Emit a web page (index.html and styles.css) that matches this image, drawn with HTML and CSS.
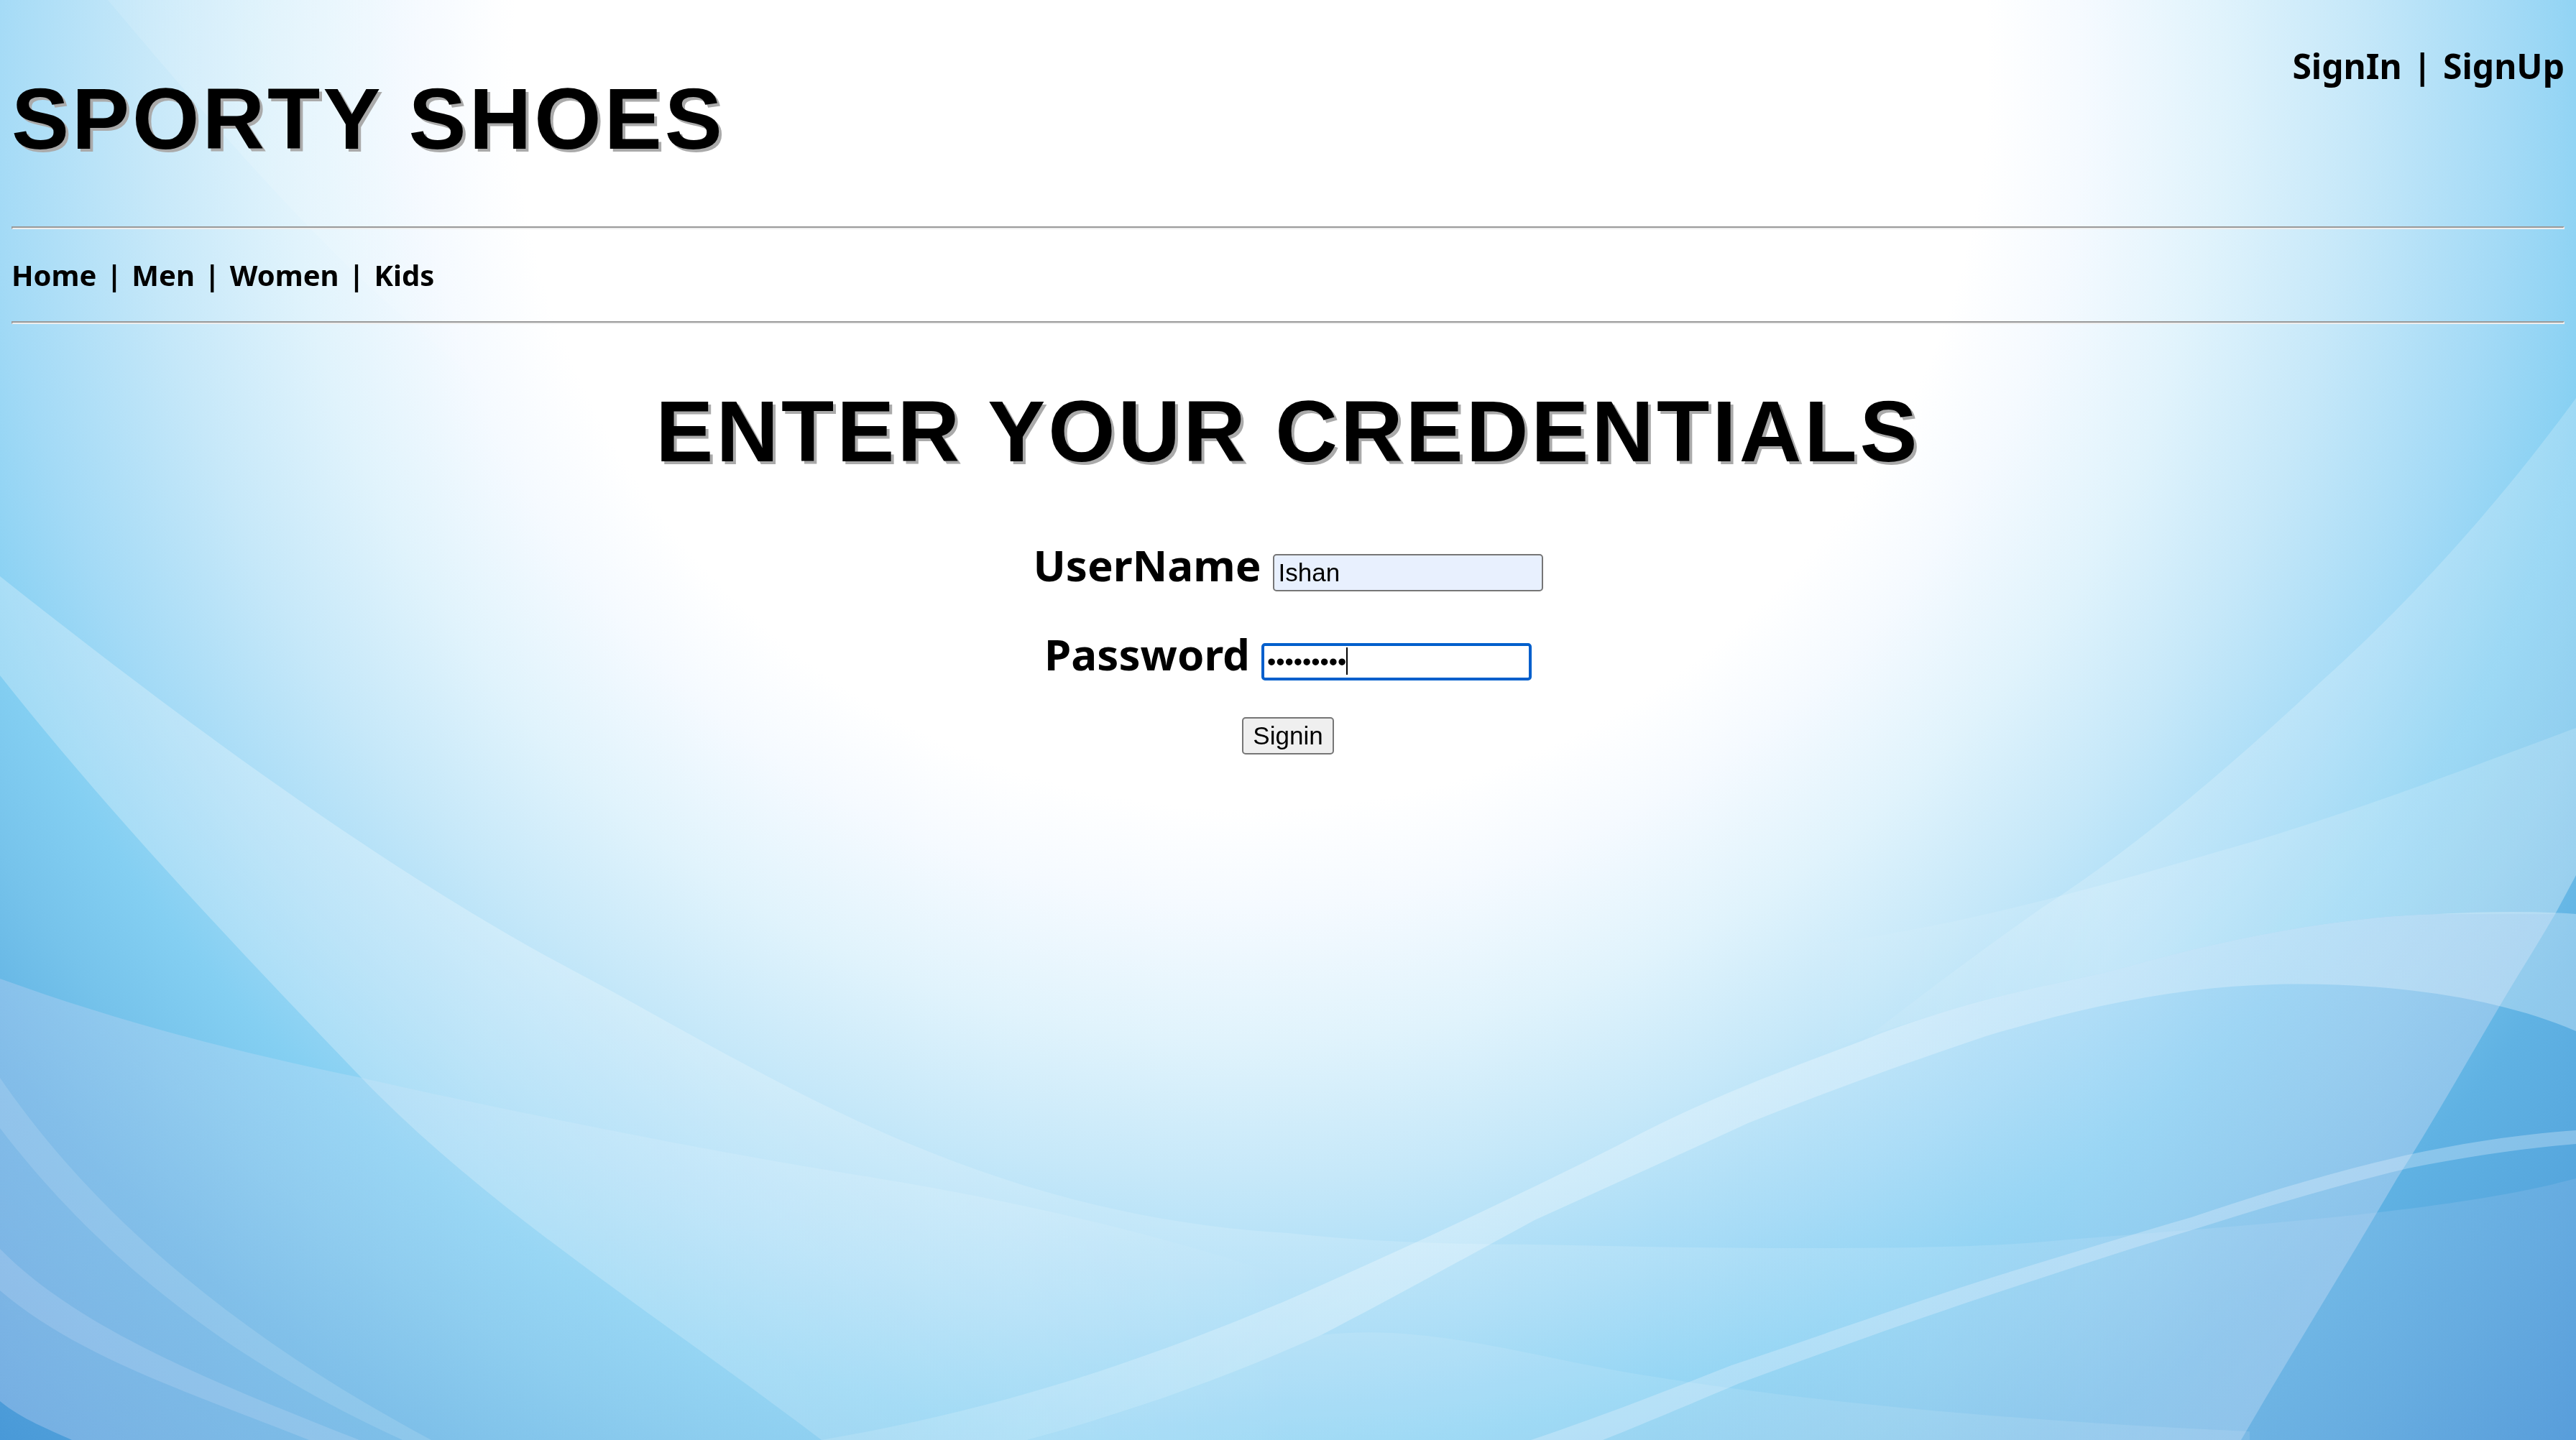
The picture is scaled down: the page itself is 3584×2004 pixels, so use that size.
FILE: index.html
```html
<!DOCTYPE html>
<html lang="en">
<head>
<meta charset="utf-8">
<title>Sporty Shoes</title>
<link rel="stylesheet" href="styles.css">
</head>
<body>
<svg class="backdrop" viewBox="0 0 3584 2004" preserveAspectRatio="none" aria-hidden="true">
  <defs>
    <radialGradient id="sky" gradientUnits="userSpaceOnUse" cx="1740" cy="100" r="2700">
      <stop offset=".38" stop-color="#fff"/>
      <stop offset=".43" stop-color="#f5faff"/>
      <stop offset=".5" stop-color="#e0f3fc"/>
      <stop offset=".57" stop-color="#c6e8f9"/>
      <stop offset=".65" stop-color="#a3daf6"/>
      <stop offset=".71" stop-color="#84cff2"/>
      <stop offset=".76" stop-color="#76c3eb"/>
      <stop offset=".82" stop-color="#60b2e3"/>
      <stop offset=".9" stop-color="#54a4dc"/>
      <stop offset="1" stop-color="#4090d4"/>
    </radialGradient>
    <linearGradient id="leftSheet" gradientUnits="userSpaceOnUse" x1="0" y1="900" x2="1500" y2="1700">
      <stop offset="0" stop-color="#fff" stop-opacity=".26"/>
      <stop offset=".5" stop-color="#fff" stop-opacity=".26"/>
      <stop offset="1" stop-color="#fff" stop-opacity=".14"/>
    </linearGradient>
    <linearGradient id="lowSheet" gradientUnits="userSpaceOnUse" x1="0" y1="0" x2="1800" y2="0">
      <stop offset="0" stop-color="#bccff2" stop-opacity=".38"/>
      <stop offset=".4" stop-color="#d8edfb" stop-opacity=".24"/>
      <stop offset=".8" stop-color="#fff" stop-opacity=".12"/>
      <stop offset="1" stop-color="#fff" stop-opacity="0"/>
    </linearGradient>
    <linearGradient id="rightSheet" gradientUnits="userSpaceOnUse" x1="2500" y1="0" x2="3584" y2="0">
      <stop offset="0" stop-color="#fff" stop-opacity="0"/>
      <stop offset=".4" stop-color="#fff" stop-opacity=".2"/>
      <stop offset="1" stop-color="#fff" stop-opacity=".2"/>
    </linearGradient>
    <linearGradient id="steepSheet" gradientUnits="userSpaceOnUse" x1="2300" y1="0" x2="3300" y2="0">
      <stop offset="0" stop-color="#d8ecfb" stop-opacity="0"/>
      <stop offset=".6" stop-color="#d0e6fa" stop-opacity=".28"/>
      <stop offset="1" stop-color="#c4d9f4" stop-opacity=".44"/>
    </linearGradient>
    <linearGradient id="floorSheet" gradientUnits="userSpaceOnUse" x1="1792" y1="0" x2="3584" y2="0">
      <stop offset="0" stop-color="#fff" stop-opacity=".14"/>
      <stop offset=".5" stop-color="#e8f6ff" stop-opacity=".16"/>
      <stop offset="1" stop-color="#a9c4ee" stop-opacity=".2"/>
    </linearGradient>
    <linearGradient id="band" gradientUnits="userSpaceOnUse" x1="1150" y1="0" x2="3584" y2="0">
      <stop offset="0" stop-color="#fff" stop-opacity=".12"/>
      <stop offset=".3" stop-color="#fff" stop-opacity=".3"/>
      <stop offset="1" stop-color="#e4f2fc" stop-opacity=".36"/>
    </linearGradient>
    <linearGradient id="cornerSheet" gradientUnits="userSpaceOnUse" x1="0" y1="0" x2="900" y2="0">
      <stop offset="0" stop-color="#fff" stop-opacity=".05"/>
      <stop offset=".3" stop-color="#fff" stop-opacity=".14"/>
      <stop offset="1" stop-color="#fff" stop-opacity="0"/>
    </linearGradient>
  </defs>
  <rect width="3584" height="2004" fill="url(#sky)"/>
  <path fill="url(#cornerSheet)" d="M150 0C260 130 420 320 560 440S850 700 1100 820V0Z"/>
  <path fill="url(#leftSheet)" d="M0 802C250 1000 540 1215 800 1352S1350 1690 1792 1716V2004H1143C900 1820 676 1680 503 1500S150 1130 0 940Z"/>
  <path fill="url(#floorSheet)" d="M1792 1716C1900 1728 2020 1732 2135 1732C2400 1738 2680 1740 2820 1730C3080 1708 3400 1690 3584 1640V2004H1792Z"/>
  <path fill="url(#lowSheet)" d="M0 1362C160 1420 330 1465 503 1500C700 1545 1000 1604 1143 1627C1250 1645 1500 1680 1800 1780V2004H100C70 1990 30 1975 0 1950Z"/>
  <path fill="#fff" fill-opacity=".13" d="M0 1500C130 1690 330 1860 600 2004H560C310 1890 130 1740 0 1570Z"/>
  <path fill="#dce8fb" fill-opacity=".2" d="M0 1738C110 1850 300 1925 500 2004H430C270 1940 110 1890 0 1796Z"/>
  <path fill="url(#rightSheet)" d="M3584 554C3470 710 3350 840 3231 947C3100 1070 2970 1180 2843 1262C2760 1320 2680 1380 2592 1448C2710 1400 2830 1375 2935 1352C3080 1310 3250 1275 3392 1272H3555L3584 1218Z"/>
  <path fill="url(#rightSheet)" fill-opacity=".8" d="M3584 1013C3430 1070 3250 1140 3083 1186C2900 1240 2720 1290 2535 1314V1465C2650 1420 2800 1380 2935 1352C3080 1310 3250 1275 3392 1272H3555L3584 1218Z"/>
  <path fill="url(#steepSheet)" d="M3555 1272C3530 1315 3500 1362 3472 1410C3425 1490 3380 1570 3335 1640C3265 1760 3190 1880 3118 2004H2300V1572C2400 1525 2490 1485 2592 1448C2710 1400 2830 1375 2935 1352C3080 1310 3250 1275 3392 1272Z"/>
  <path fill="url(#band)" d="M1143 2004C1400 1960 1600 1890 1792 1809C1960 1735 2110 1665 2249 1595C2370 1530 2480 1490 2592 1448C2710 1400 2830 1375 2935 1352C3080 1310 3250 1275 3392 1272Q3500 1266 3584 1272V1435C3480 1390 3330 1366 3163 1370C3020 1374 2890 1404 2763 1442C2650 1480 2540 1520 2432 1563C2330 1610 2230 1655 2135 1698C2030 1755 1940 1805 1838 1858C1700 1920 1570 1965 1429 2004Z"/>
  <path fill="#eef6ff" fill-opacity=".3" d="M2130 2004C2230 1970 2320 1935 2409 1900C2530 1860 2640 1820 2752 1784C2860 1750 2960 1720 3049 1694C3150 1660 3250 1630 3346 1608C3430 1590 3510 1578 3584 1573V1592C3510 1598 3430 1610 3350 1626C3250 1650 3150 1680 3049 1712C2950 1742 2860 1772 2760 1805C2640 1845 2530 1885 2420 1925C2350 1955 2290 1980 2230 2004Z"/>
  <path fill="#fff" fill-opacity=".1" d="M1838 1858C1990 1840 2130 1890 2295 1915C2480 1945 2750 1975 3130 1992V2004H1430C1570 1965 1700 1920 1838 1858Z"/>
</svg>

<header class="masthead">
  <h1>SPORTY SHOES</h1>
  <nav class="account" aria-label="Account">
    <a href="#signin">SignIn</a>
    <span class="divider">|</span>
    <a href="#signup">SignUp</a>
  </nav>
</header>
<hr>
<nav class="sections" aria-label="Sections">
  <a href="#home">Home</a>
  <span class="divider">|</span>
  <a href="#men">Men</a>
  <span class="divider">|</span>
  <a href="#women">Women</a>
  <span class="divider">|</span>
  <a href="#kids">Kids</a>
</nav>
<hr>
<main>
  <h1>ENTER YOUR CREDENTIALS</h1>
  <form class="login">
    <div class="field">
      <label for="username">UserName</label>
      <input class="autofilled" id="username" type="text" value="Ishan">
    </div>
    <div class="field">
      <label for="password">Password</label>
      <div class="entry">
        <input class="active" id="password" type="password" value="shoes1234">
        <span class="caret"></span>
      </div>
    </div>
    <button type="submit">Signin</button>
  </form>
</main>
</body>
</html>
```
FILE: styles.css
```css
body {
  display: flow-root;
  margin: 16px;
  color: #000;
  font-family: "Noto Sans", sans-serif;
  font-weight: bold;
}

.backdrop {
  position: fixed;
  inset: 0;
  z-index: -1;
  width: 100%;
  height: 100%;
}

a {
  color: inherit;
  text-decoration: none;
}

h1 {
  margin: 80px 0;
  font-family: "Liberation Sans", Arial, sans-serif;
  font-size: 120px;
  line-height: 139px;
  letter-spacing: 4px;
  text-shadow: 4px 4px 0 #aaa;
}

hr {
  margin: 0;
  border: 2px solid;
  border-color: #9a9a9a #eee #eee #9a9a9a;
}

.masthead {
  display: flex;
  justify-content: space-between;
  align-items: flex-start;
}

.account {
  margin-top: 48px;
  font-size: 48px;
  line-height: 56px;
}

.sections {
  margin: 40px 0;
  font-size: 40px;
  line-height: 48px;
}

.divider {
  margin: 0 3px;
}

main {
  text-align: center;
}

.login {
  display: flex;
  flex-direction: column;
  align-items: center;
  gap: 51px;
}

.field {
  display: flex;
  align-items: baseline;
  gap: 16px;
  font-size: 60px;
  line-height: 72px;
}

.entry {
  position: relative;
}

input,
button {
  box-sizing: border-box;
  height: 52px;
  border: 2px solid #767676;
  border-radius: 5px;
  color: #000;
  font-family: "Liberation Sans", Arial, sans-serif;
  font-size: 35px;
  line-height: 40px;
}

input {
  display: block;
  width: 376px;
  padding: 4px 6px;
  outline: none;
}

.autofilled {
  background: #e8f0fe;
}

.active {
  border: 4px solid #005fcc;
  padding: 2px 4px;
  background: #fff;
}

.caret {
  position: absolute;
  top: 6px;
  left: 118px;
  width: 2px;
  height: 38px;
  background: #000;
}

button {
  width: 128px;
  padding: 4px 12px;
  background: #efefef;
}
```
